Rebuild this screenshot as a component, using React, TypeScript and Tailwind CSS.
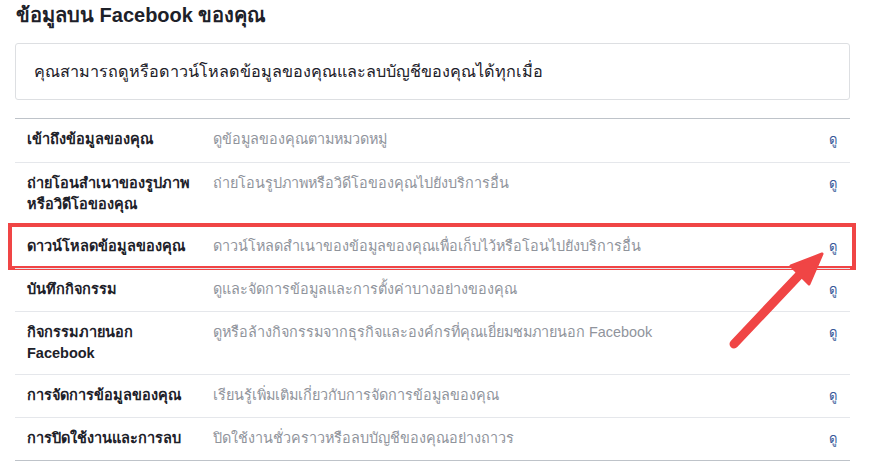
import React from "react";

type Item = { label: React.ReactNode; desc: string; highlight?: boolean };

const items: Item[] = [
  { label: "เข้าถึงข้อมูลของคุณ", desc: "ดูข้อมูลของคุณตามหมวดหมู่" },
  { label: <>ถ่ายโอนสำเนาของรูปภาพ<br />หรือวิดีโอของคุณ</>, desc: "ถ่ายโอนรูปภาพหรือวิดีโอของคุณไปยังบริการอื่น" },
  { label: "ดาวน์โหลดข้อมูลของคุณ", desc: "ดาวน์โหลดสำเนาของข้อมูลของคุณเพื่อเก็บไว้หรือโอนไปยังบริการอื่น", highlight: true },
  { label: "บันทึกกิจกรรม", desc: "ดูและจัดการข้อมูลและการตั้งค่าบางอย่างของคุณ" },
  { label: <>กิจกรรมภายนอก<br />Facebook</>, desc: "ดูหรือล้างกิจกรรมจากธุรกิจและองค์กรที่คุณเยี่ยมชมภายนอก Facebook" },
  { label: "การจัดการข้อมูลของคุณ", desc: "เรียนรู้เพิ่มเติมเกี่ยวกับการจัดการข้อมูลของคุณ" },
  { label: "การปิดใช้งานและการลบ", desc: "ปิดใช้งานชั่วคราวหรือลบบัญชีของคุณอย่างถาวร" },
];

function Row({ item, first }: { item: Item; first: boolean }) {
  return (
    <div className={"relative flex items-start min-h-[43px] py-[10px] pl-[12px] pr-[12px] " + (first ? "" : "border-t border-[#e5e7eb]")}>
      <div className="w-[186px] shrink-0 pr-[8px] text-[14.5px] leading-[21px] font-bold text-[#1d2129]">{item.label}</div>
      <div className="flex-1 text-[14.4px] leading-[21px] text-[#90949c]">{item.desc}</div>
      <a className="text-[13px] leading-[21px] text-[#365899] pr-[1px]">ดู</a>
      {item.highlight && (
        <div className="absolute -left-[7px] -right-[6px] -top-[3px] -bottom-[2px] border-[4px] border-[#f04545] pointer-events-none" />
      )}
    </div>
  );
}

export default function App() {
  return (
    <div className="relative w-[871px] h-[473px] bg-white overflow-hidden" style={{ fontFamily: '"Liberation Sans", "DejaVu Sans", sans-serif' }}>
      <div className="pl-[15px] pr-[21px]">
        <h1 className="pt-[3px] pl-[1px] text-[20px] leading-[24px] font-bold text-[#1d2129]">ข้อมูลบน Facebook ของคุณ</h1>
        <div className="mt-[16px] h-[57px] flex items-center px-[18px] border border-[#dddfe2] rounded-[3px] text-[16.2px] text-[#1d2129]">
          คุณสามารถดูหรือดาวน์โหลดข้อมูลของคุณและลบบัญชีของคุณได้ทุกเมื่อ
        </div>
        <div className="mt-[18px] border-t border-b border-[#bec3c9]">
          {items.map((it, i) => (
            <Row key={i} item={it} first={i === 0} />
          ))}
        </div>
      </div>
      <svg className="absolute left-[720px] top-[240px]" width="120" height="120" viewBox="0 0 120 120">
        <line x1="14" y1="104" x2="84" y2="30" stroke="#f04545" strokeWidth="9" strokeLinecap="round" />
        <polygon points="102,14 71,26 89,44" fill="#f04545" stroke="#f04545" strokeWidth="3" strokeLinejoin="round" />
      </svg>
    </div>
  );
}
